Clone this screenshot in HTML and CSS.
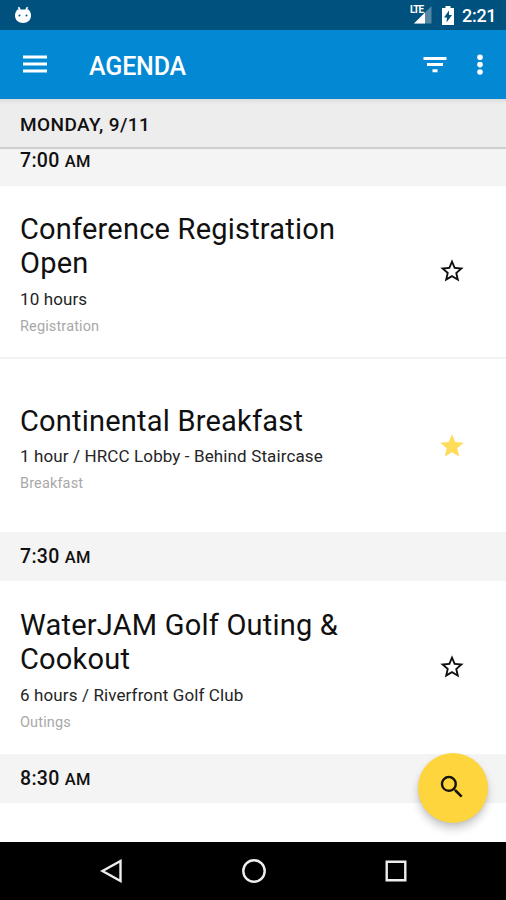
FILE: index.html
```html
<!DOCTYPE html>
<html lang="en">
<head>
<meta charset="utf-8">
<title>Agenda</title>
<link rel="stylesheet" href="styles.css">
</head>
<body>
<div class="screen">
  <header class="status">
    <svg class="droid" viewBox="0 0 18 18" width="18" height="18"><path d="M4.500 1.200 6 4M13.500 1.200 12 4" stroke="#fff" stroke-width="1.700"/><path d="M3.500 3.500h11C16 5 17 7 17 9.500c0 4.600-3.500 7.500-8 7.500s-8-2.900-8-7.500C1 7 2 5 3.500 3.500z" fill="#fff"/><circle cx="5.500" cy="9.500" r="1" fill="#00517d"/><circle cx="12.500" cy="9.500" r="1" fill="#00517d"/></svg>
    <div class="signal">
      <svg viewBox="0 0 18 18" width="18" height="18"><path d="M17.500 0v17.500H0z" fill="#5488a5"/><path d="M11 6.500v11H0z" fill="#fff"/></svg>
      <span class="lte">LTE</span>
    </div>
    <svg class="battery" viewBox="0 0 12 19" width="12" height="19"><path d="M3.500 0h5v2H12v17H0V2h3.500z" fill="#fff"/><path d="M7 4.500 2 11.500h3L4.500 16.500 10 9H7z" fill="#00517d"/></svg>
    <span class="clock">2:21</span>
  </header>
  <nav class="toolbar">
    <svg class="menu" viewBox="0 0 24 18" width="24" height="18"><path d="M0 2h24M0 9h24M0 16h24" stroke="#fff" stroke-width="3"/></svg>
    <h1>AGENDA</h1>
    <svg class="filter" viewBox="0 0 24 18" width="24" height="18"><path d="M.5 2.500h23M4 8.500h16M9.500 14.700h5" stroke="#fff" stroke-width="3"/></svg>
    <svg class="more" viewBox="0 0 6 22" width="6" height="22"><g fill="#fff"><circle cx="3" cy="3.200" r="2.800"/><circle cx="3" cy="10.600" r="2.800"/><circle cx="3" cy="18" r="2.800"/></g></svg>
  </nav>
  <div class="date">MONDAY, 9/11</div>
  <main class="list">
    <h2 class="time first">7:00 <small>AM</small></h2>
    <article class="event registration">
      <div class="info"><h3>Conference Registration Open</h3><p class="detail">10 hours</p><p class="kind">Registration</p></div>
      <svg class="star" viewBox="0 0 24 24" width="28" height="28"><path d="M22 9.240l-7.190-.620L12 2 9.190 8.630 2 9.240l5.460 4.730L5.820 21 12 17.270 18.180 21l-1.630-7.030L22 9.240zM12 15.400l-3.760 2.270 1-4.280-3.320-2.880 4.380-.380L12 6.100l1.710 4.040 4.380.380-3.320 2.880 1 4.280L12 15.400z"/></svg>
    </article>
    <article class="event breakfast">
      <div class="info"><h3>Continental Breakfast</h3><p class="detail">1 hour / HRCC Lobby - Behind Staircase</p><p class="kind">Breakfast</p></div>
      <svg class="star saved" viewBox="0 0 24 24" width="28" height="28"><path d="M12 17.270 18.180 21l-1.640-7.030L22 9.240l-7.190-.610L12 2 9.190 8.630 2 9.240l5.460 4.730L5.820 21z"/></svg>
    </article>
    <h2 class="time">7:30 <small>AM</small></h2>
    <article class="event golf">
      <div class="info"><h3>WaterJAM Golf Outing &amp; Cookout</h3><p class="detail">6 hours / Riverfront Golf Club</p><p class="kind">Outings</p></div>
      <svg class="star" viewBox="0 0 24 24" width="28" height="28"><path d="M22 9.240l-7.190-.620L12 2 9.190 8.630 2 9.240l5.460 4.730L5.820 21 12 17.270 18.180 21l-1.630-7.030L22 9.240zM12 15.400l-3.760 2.270 1-4.280-3.320-2.880 4.380-.380L12 6.100l1.710 4.040 4.380.380-3.320 2.880 1 4.280L12 15.400z"/></svg>
    </article>
    <h2 class="time">8:30 <small>AM</small></h2>
  </main>
  <div class="fab"><svg viewBox="0 0 24 24" width="30" height="30"><path d="M15.500 14h-.790l-.280-.270A6.471 6.471 0 0 0 16 9.500 6.500 6.500 0 1 0 9.500 16c1.610 0 3.090-.590 4.230-1.570l.270.280v.790l5 4.990L20.490 19l-4.990-5zm-6 0C7.010 14 5 11.990 5 9.500S7.010 5 9.500 5 14 7.010 14 9.500 11.990 14 9.500 14z" fill="#17150a"/></svg></div>
  <footer class="navbar">
    <svg viewBox="0 0 26 26" width="26" height="26"><path d="M22.500 3v20L4.500 13z"/></svg>
    <svg viewBox="0 0 26 26" width="26" height="26"><circle cx="13" cy="13" r="10.700"/></svg>
    <svg viewBox="0 0 26 26" width="26" height="26"><path d="M3.700 3.700h18.600v18.600H3.700z"/></svg>
  </footer>
</div>
</body>
</html>
```
FILE: styles.css
```css
* { box-sizing: border-box; margin: 0; padding: 0; }
svg { display: block; flex: none; }
body { font-family: Roboto, sans-serif; background: #fff; color: #101010; }
.screen { position: relative; width: 506px; height: 900px; display: flex; flex-direction: column; overflow: hidden; }

.status { flex: none; height: 30px; background: #00517d; display: flex; align-items: center; padding: 0 10px 0 14px; }
.signal { position: relative; margin-left: auto; margin-right: 10px; padding-left: 4px; }
.lte { position: absolute; left: 0; top: -1px; font-size: 10px; line-height: 9px; font-weight: 700; letter-spacing: -1px; color: #fff; background: #00517d; }
.clock { margin-left: 8px; width: 34px; padding-top: 1px; font-size: 18px; font-weight: 500; line-height: 30px; color: #fff; white-space: nowrap; letter-spacing: -.3px; }

.toolbar { flex: none; height: 69px; background: #0388d4; display: flex; align-items: center; padding: 0 23px; color: #fff; }
.menu { margin-top: -2px; }
.toolbar h1 { margin-left: 42px; padding-top: 3px; font-size: 25px; font-weight: 500; letter-spacing: -.15px; }
.filter { margin-left: auto; margin-right: 30px; }

.date { flex: none; height: 50px; padding-left: 20px; font-size: 19px; font-weight: 500; line-height: 51px; letter-spacing: .4px; background: linear-gradient(#dcdcdc, #ededed 5px); border-bottom: 2px solid #cfcfcf; }
.list { flex: 1; min-height: 0; overflow: hidden; }
.time { height: 49px; padding-left: 20px; background: #f4f4f4; font-size: 19.500px; font-weight: 500; line-height: 49px; letter-spacing: .3px; }
.time small { font-size: 16.500px; letter-spacing: .2px; }
.time.first { height: 37px; line-height: 23px; }

.event { height: 173px; display: flex; padding: 0 40px 0 20px; justify-content: space-between; }
.info { width: 340px; }
.event h3 { font-size: 29px; line-height: 34px; font-weight: 400; letter-spacing: .21px; }
.detail { margin-top: 6px; font-size: 17px; line-height: 26px; letter-spacing: .12px; color: #242424; white-space: nowrap; }
.kind { margin-top: 1px; font-size: 14.500px; line-height: 26px; letter-spacing: .14px; color: #a8a8a8; }
.registration { padding-top: 26px; border-bottom: 2px solid #f3f3f3; }
.registration .kind { margin-top: 2px; }
.breakfast { padding-top: 45px; }
.breakfast .detail { margin-top: 5px; }
.breakfast .kind { margin-top: 2px; }
.golf { padding-top: 27px; }
.golf .kind { margin-top: 2px; }
.star { fill: #111; margin-top: 45px; }
.star.saved { fill: #ffdc5a; margin-top: 28px; }

.fab { position: absolute; left: 418px; top: 753px; width: 70px; height: 70px; border-radius: 50%; background: #ffd53e; display: flex; align-items: center; justify-content: center; box-shadow: 0 6px 9px rgba(0, 0, 0, .2), 0 1px 3px rgba(0, 0, 0, .08); }
.fab svg { margin: -2px 2px 0 0; }
.navbar { flex: none; height: 58px; background: #000; display: flex; align-items: center; justify-content: space-between; padding: 0 97px 0 98px; }
.navbar svg { fill: none; stroke: #eee; stroke-width: 2.400; }
```
